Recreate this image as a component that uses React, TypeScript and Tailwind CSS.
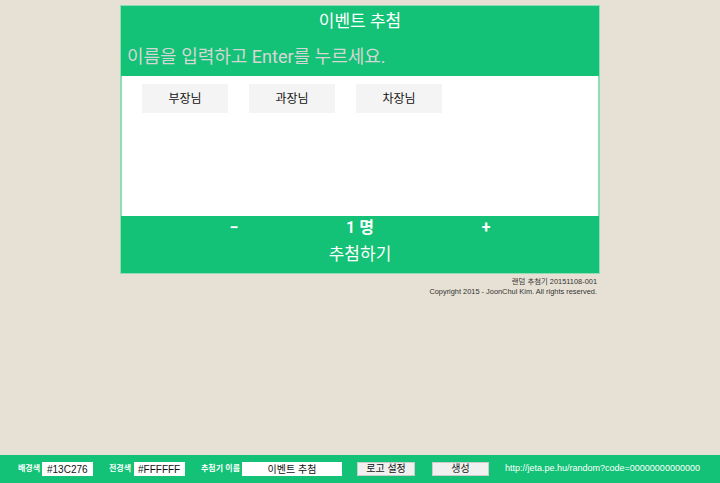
export default function App() {
  const names = ['부장님', '과장님', '차장님']
  const font = { fontFamily: 'Roboto, "Noto Sans CJK KR", sans-serif' }
  const small = { fontFamily: '"Liberation Sans", "Noto Sans CJK KR", sans-serif' }

  return (
    <div className="w-[720px] h-[483px] flex flex-col bg-[#e6e1d4] text-[#222]" style={font}>
      {/* Main panel */}
      <div className="mx-auto mt-[5px] w-[480px] bg-[#13c276] border border-[#8fdcb5]">
        <h1 className="h-[31px] flex items-center justify-center text-white text-[17px] leading-none">이벤트 추첨</h1>
        <input
          placeholder="이름을 입력하고 Enter를 누르세요."
          className="block h-[39px] w-full bg-transparent px-[6px] text-[18px] text-white placeholder:text-[#d6d6d6] outline-none"
        />
        <div className="h-[140px] bg-white border-x border-[#8fdcb5] px-[20px] pt-[8px] flex items-start gap-[21px]">
          {names.map((n) => (
            <div key={n} className="w-[86px] h-[29px] flex items-center justify-center bg-[#f4f4f4] text-[12px] text-[#111]">
              {n}
            </div>
          ))}
        </div>
        <div className="flex justify-center h-[24px] items-center text-white">
          <button className="w-[126px] text-[16px] font-bold leading-none">−</button>
          <div className="w-[126px] text-center text-[16px] font-semibold leading-none">1 명</div>
          <button className="w-[126px] text-[16px] font-bold leading-none">+</button>
        </div>
        <button className="block w-full h-[33px] text-white text-[17px] leading-none pb-[4px]">추첨하기</button>
      </div>

      {/* Footer */}
      <div className="mx-auto w-[480px] text-right pr-[3px] pt-[3px] text-[7.4px] leading-[10px] text-[#333]" style={small}>
        <div>랜덤 추첨기 20151108-001</div>
        <div>Copyright 2015 - JoonChul Kim. All rights reserved.</div>
      </div>

      <div className="flex-1" />

      {/* Settings bar */}
      <div className="h-[28px] bg-[#13c276] flex items-center pl-[18px] text-white text-[8px] whitespace-nowrap" style={small}>
        <span className="shrink-0 w-[20px] font-bold">배경색</span>
        <input defaultValue="#13C276" className="shrink-0 ml-[4px] w-[51px] h-[14px] bg-white text-[#111] text-[10px] px-[5px] outline-none" />
        <span className="shrink-0 ml-[16px] w-[21px] font-bold">전경색</span>
        <input defaultValue="#FFFFFF" className="shrink-0 ml-[4px] w-[51px] h-[14px] bg-white text-[#111] text-[10px] px-[4px] outline-none" />
        <span className="shrink-0 ml-[16px] w-[37px] font-bold">추첨기 이름</span>
        <input defaultValue="이벤트 추첨" className="shrink-0 ml-[4px] w-[100px] h-[14px] bg-white text-[#111] text-[10px] text-center outline-none" />
        <button className="shrink-0 ml-[15px] w-[58px] h-[14px] bg-[#f0f0f0] border border-[#ccc] text-[#111] text-[10px] leading-none">로고 설정</button>
        <button className="shrink-0 ml-[17px] w-[57px] h-[14px] bg-[#f0f0f0] border border-[#ccc] text-[#111] text-[10px] leading-none">생성</button>
        <span className="shrink-0 ml-[16px] text-[9px]">http://jeta.pe.hu/random?code=00000000000000</span>
      </div>
    </div>
  )
}
